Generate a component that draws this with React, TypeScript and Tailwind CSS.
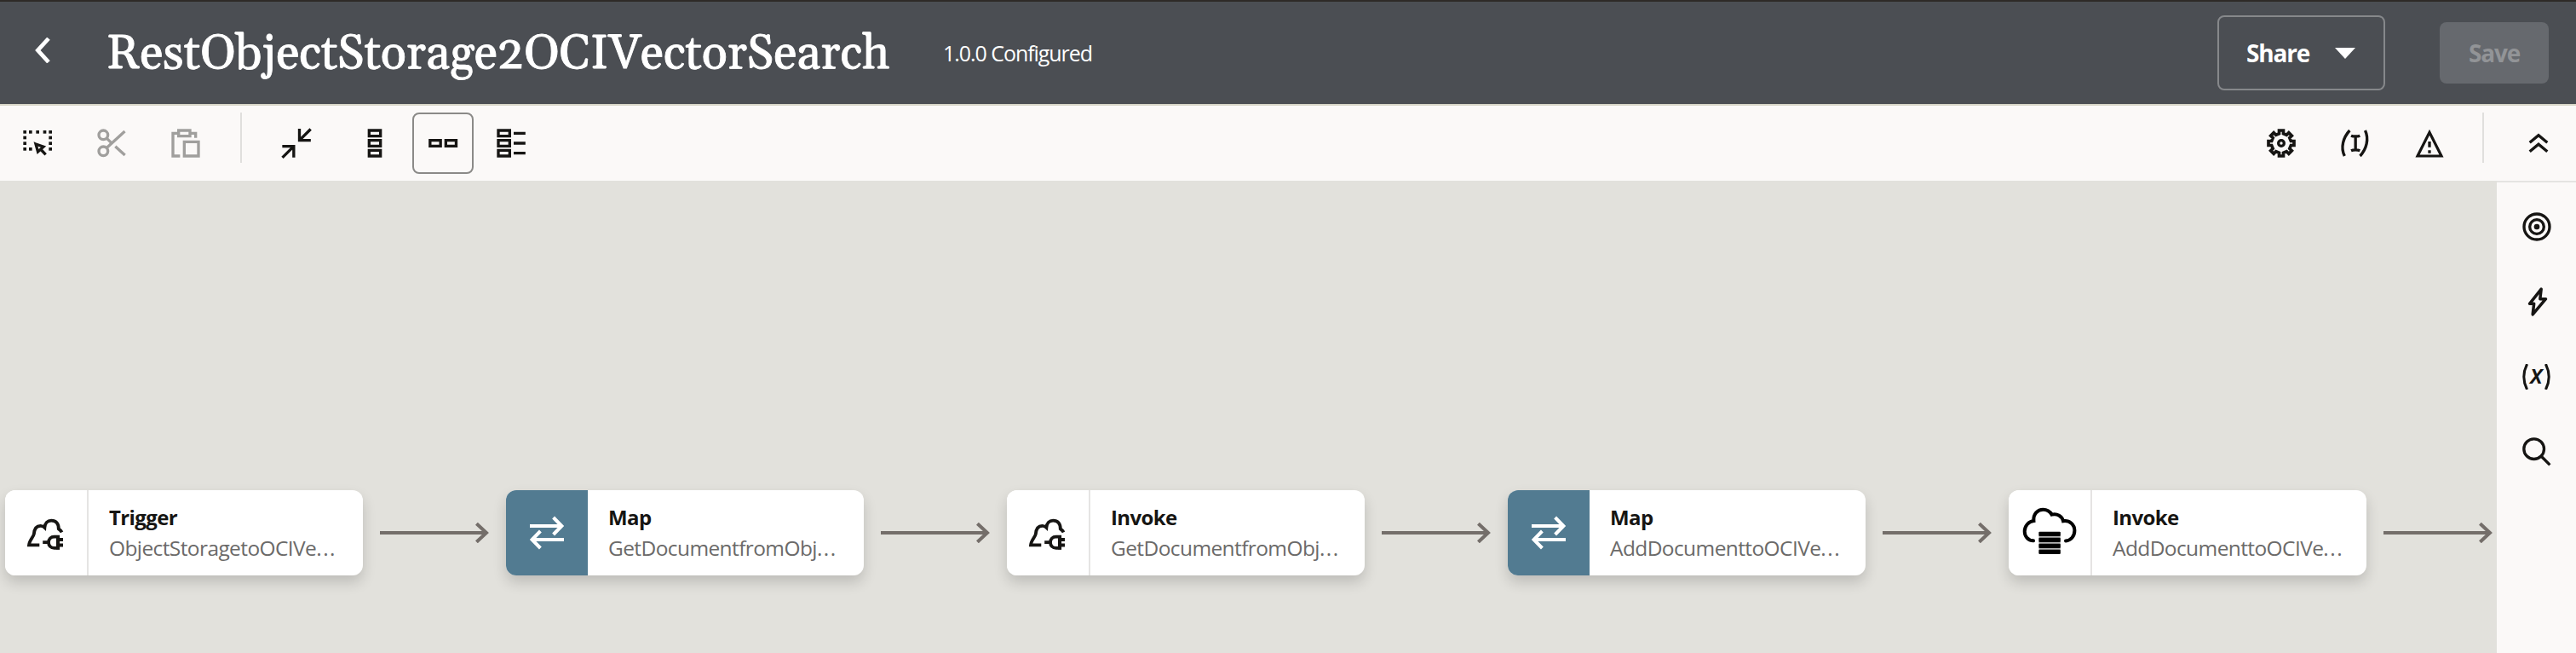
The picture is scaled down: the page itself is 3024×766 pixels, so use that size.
import type { ReactNode } from "react";

type IconProps = { children: ReactNode; className?: string };

function Icon({ children, className = "text-[#161513]" }: IconProps) {
  return (
    <svg
      viewBox="0 0 24 24"
      className={`size-10 shrink-0 ${className}`}
      fill="none"
      stroke="currentColor"
      strokeWidth={2}
    >
      {children}
    </svg>
  );
}

const selectDots: [number, number][] = [
  [2, 3], [6, 3], [11, 3], [16, 3], [20, 3],
  [2, 7], [20, 7], [2, 11], [20, 11], [2, 15], [6, 15], [20, 15],
];

const SelectIcon = () => (
  <Icon>
    {selectDots.map(([x, y]) => (
      <rect key={`${x}-${y}`} x={x} y={y} width="2.2" height="2.2" fill="currentColor" stroke="none" />
    ))}
    <path d="M10.8 12.6l5.4 1.9-3.9 3.5zM13.6 15.6l4.2 4.4" />
  </Icon>
);

const CutIcon = () => (
  <Icon className="text-[#a09f9d]">
    <circle cx="6.2" cy="6.2" r="3.2" />
    <circle cx="6.2" cy="17.6" r="3.2" />
    <path d="M8.5 15.3L21.3 3.6M8.5 8.5l4 3.9M14.6 14.2l6.8 6.2" />
  </Icon>
);

const PasteIcon = () => (
  <Icon className="text-[#a09f9d]">
    <path d="M8 21H3V5h4M15 5h4v3.2" />
    <path d="M7 3h8v4H7zM11 11h10v10H11z" />
  </Icon>
);

const CollapseIcon = () => (
  <Icon>
    <path d="M14.1 1.8V10H22.1M14.1 10L22 2.1M2 14.2h8.1V22M10.1 14.2L2.1 22.1" />
  </Icon>
);

const VerticalIcon = () => (
  <Icon>
    <path d="M8 3h8v4H8zM8 10h8v4H8zM8 17h8v4H8z" />
  </Icon>
);

const HorizontalIcon = () => (
  <Icon>
    <path d="M2.9 10h7.4v4H2.9zM14 10h7.3v4H14z" />
  </Icon>
);

const ListIcon = () => (
  <Icon>
    <path d="M3 3h8v4H3zM3 10h8v4H3zM3 17h8v4H3zM13.8 5h8.3M13.8 12h8.3M13.8 19h8.3" />
  </Icon>
);

const gearPoints = Array.from({ length: 8 }, (_, i) => {
  const a = (i * Math.PI) / 4;
  return [[-1.5, -6.8], [-1.5, -9], [1.5, -9], [1.5, -6.8]]
    .map(([x, y]) => {
      const px = 12 + x * Math.cos(a) - y * Math.sin(a);
      const py = 12 + x * Math.sin(a) + y * Math.cos(a);
      return `${px.toFixed(2)},${py.toFixed(2)}`;
    })
    .join(" ");
}).join(" ");

const GearIcon = () => (
  <Icon>
    <polygon points={gearPoints} strokeWidth={2.2} />
    <circle cx="12" cy="12" r="2" />
  </Icon>
);

const VariableIcon = () => (
  <Icon>
    <path d="M8 3C3.4 8 1.4 15 4.4 21M18.9 3c2.8 6 1 13-3.6 18" />
    <path d="M9 6.7c1.4.6 4.8.6 6.2 0M9 17.2c1.4-.6 4.8-.6 6.2 0M12.1 7v10" />
  </Icon>
);

const WarningIcon = () => (
  <Icon>
    <path d="M12 4.3L20.4 21H3.6z" strokeWidth={1.9} />
    <path d="M12 10.8v4M12 17v2" />
  </Icon>
);

const ChevronsUpIcon = () => (
  <Icon>
    <path d="M5.8 11.6L12 6.4l6.2 5.2M5.8 17.9L12 12.7l6.2 5.2" />
  </Icon>
);

const TargetIcon = () => (
  <Icon>
    <circle cx="12" cy="12" r="9" />
    <circle cx="12" cy="12" r="5" />
    <circle cx="12" cy="12" r="2" fill="currentColor" stroke="none" />
  </Icon>
);

const BoltIcon = () => (
  <Icon>
    <path d="M15.1 3.1L14.3 10h4L9.1 20.9l.9-7.5H6.9z" strokeLinejoin="round" strokeWidth={2.1} />
  </Icon>
);

const SearchIcon = () => (
  <Icon>
    <circle cx="10" cy="10" r="7.1" />
    <path d="M15 15l6.2 6.2" />
  </Icon>
);

const AdapterIcon = () => (
  <svg viewBox="0 0 48 48" className="size-12" fill="none" stroke="#161513" strokeWidth={3.8}>
    <path d="M16.3 38.4H4C4.300 33.500 8.800 29.500 9.800 25.600C10.200 20 12.500 15.800 17.500 15.800C19.600 15.800 21 16.400 22.400 17.800C22.800 12.600 25.800 9.600 30.200 9.600C35.800 9.600 39 13.400 38.800 19.400C40.200 20.400 41.600 21.400 42.600 23.400" />
    <path d="M38.200 28.600h-4.400c-4.200 0-6.800 2.800-6.800 6.600s2.600 6.600 6.800 6.600h4.400zM20.200 35.200H27M39 32h5M39 38.500h5" />
    <path d="M36 27h4v16.600h-4z" fill="#161513" stroke="none" />
  </svg>
);

const MapIcon = () => (
  <svg viewBox="0 0 48 48" className="size-12" fill="none" stroke="#fff" strokeWidth={4}>
    <path d="M4 16h37M31.600 6l9.800 10-9.800 10M44 32H7M16.400 22L6.600 32l9.800 10" />
  </svg>
);

const CloudDbIcon = () => (
  <svg viewBox="0 0 64 64" className="size-16" fill="none" stroke="#000" strokeWidth={4} strokeLinecap="round">
    <path d="M13 41.300C6.500 41 2.700 36 2.700 30.200C2.700 24 7.500 18.600 13.400 18C12.600 10 18 4.800 24.400 4.800C29 4.800 32.400 7 34.600 10.600C41 9 46.800 12.600 48 18.200C55.500 17 61.400 22.500 61.400 29.300C61.400 36 57 41 51 41.400" />
    <rect x="19.400" y="31" width="25.400" height="25" fill="#b5b5b5" stroke="none" />
    <path
      d="M20.400 30.700h23.400q1 0 1 1v3.200q0 1-1 1h-23.400q-1 0-1-1v-3.200q0-1 1-1zM20.400 37.700h23.400q1 0 1 1v3.200q0 1-1 1h-23.400q-1 0-1-1v-3.200q0-1 1-1zM20.400 44.700h23.400q1 0 1 1v3.200q0 1-1 1h-23.400q-1 0-1-1v-3.200q0-1 1-1zM20.400 51.700h23.400q1 0 1 1v3.200q0 1-1 1h-23.400q-1 0-1-1v-3.200q0-1 1-1z"
      fill="#000"
      stroke="none"
    />
  </svg>
);

const Connector = () => (
  <svg viewBox="0 0 128 24" className="mx-5 h-6 w-32 shrink-0" fill="none" stroke="#746e6a" strokeWidth={4}>
    <path d="M0 12h124" />
    <path d="M113.400 1.200L125 12l-11.600 10.800" />
  </svg>
);

type Kind = "adapter" | "map" | "cloud";
type Step = { kind: Kind; title: string; detail: string };

const steps: Step[] = [
  { kind: "adapter", title: "Trigger", detail: "ObjectStoragetoOCIVe" },
  { kind: "map", title: "Map", detail: "GetDocumentfromObj" },
  { kind: "adapter", title: "Invoke", detail: "GetDocumentfromObj" },
  { kind: "map", title: "Map", detail: "AddDocumenttoOCIVe" },
  { kind: "cloud", title: "Invoke", detail: "AddDocumenttoOCIVe" },
];

function StepCard({ kind, title, detail }: Step) {
  return (
    <div className="flex h-[100px] w-[420px] shrink-0 overflow-hidden rounded-xl bg-white shadow-[0_8px_16px_rgba(0,0,0,0.16)]">
      <div
        className={
          kind === "map"
            ? "flex w-24 items-center justify-center bg-[#527b91]"
            : "flex w-[98px] items-center justify-center border-r-2 border-[#e5e4e3] bg-white"
        }
      >
        {kind === "map" ? <MapIcon /> : kind === "cloud" ? <CloudDbIcon /> : <AdapterIcon />}
      </div>
      <div className="flex flex-col pt-[14px] pl-6">
        <span className="text-[24px] leading-9 font-bold tracking-[-0.6px] text-[#161513]">{title}</span>
        <span className="text-[24.5px] leading-9 tracking-[-0.6px] whitespace-nowrap text-[#6b6a69]">
          {detail}
          <span className="tracking-[1.5px]">...</span>
        </span>
      </div>
    </div>
  );
}

const iconButton = "flex size-[72px] shrink-0 items-center justify-center rounded-lg";

export default function App() {
  return (
    <div className="flex h-[766px] w-[3024px] flex-col overflow-hidden bg-[#e2e1dc] font-['Open_Sans','Noto_Sans',sans-serif]">
      <header className="flex h-[124px] shrink-0 items-center border-t-2 border-b-2 border-t-[#2e2a27] border-b-[#d9d7c9] bg-[#4b4e53] pr-8 pl-[41px] text-white">
        <svg viewBox="0 0 18 30" className="mb-[6px] h-[30px] w-[18px]" fill="none" stroke="#fff" strokeWidth={4.8}>
          <path d="M16 1.200L3.400 15 16 28.800" />
        </svg>
        <h1 className="mt-1 ml-[66px] w-[982px] font-['Gelasio','Georgia','Liberation_Serif',serif] text-[56px] leading-[72px] whitespace-nowrap oldstyle-nums [-webkit-text-stroke:0.8px_#fff]">
          RestObjectStorage2OCIVectorSearch
        </h1>
        <span className="text-[25px] leading-9 font-medium tracking-[-1.05px]">1.0.0 Configured</span>
        <button className="mr-16 ml-auto flex h-[88px] w-[197px] items-center rounded-lg border-2 border-[#86888b] pl-8">
          <span className="w-[104px] text-left text-[28px] leading-10 font-bold tracking-[-1.2px]">Share</span>
          <svg viewBox="0 0 24 13" className="h-[13px] w-6">
            <path d="M0 0h24L12 13z" fill="#fff" />
          </svg>
        </button>
        <button className="flex h-[72px] w-32 items-center justify-center rounded-lg bg-[#66696e] text-[28px] leading-10 font-bold tracking-[-1.2px] text-[#929497]">
          Save
        </button>
      </header>

      <div className="flex h-[88px] shrink-0 items-center bg-[#fbf9f8] pr-2">
        <div className="ml-2 flex gap-[15px]">
          <button className={iconButton}><SelectIcon /></button>
          <button className={iconButton}><CutIcon /></button>
          <button className={iconButton}><PasteIcon /></button>
        </div>
        <div className="mb-[13px] ml-[28px] h-[59px] w-0.5 bg-[#e0dfdd]" />
        <button className={`ml-[28px] ${iconButton}`}><CollapseIcon /></button>
        <div className="ml-5 flex gap-2">
          <button className={iconButton}><VerticalIcon /></button>
          <button className={`${iconButton} border-2 border-[#8b8a88]`}><HorizontalIcon /></button>
          <button className={iconButton}><ListIcon /></button>
        </div>
        <div className="ml-auto flex gap-[15px]">
          <button className={iconButton}><GearIcon /></button>
          <button className={iconButton}><VariableIcon /></button>
          <button className={iconButton}><WarningIcon /></button>
        </div>
        <div className="mb-[13px] ml-[26px] h-[59px] w-0.5 bg-[#e0dfdd]" />
        <button className={`ml-[28px] ${iconButton}`}><ChevronsUpIcon /></button>
      </div>

      <div className="flex min-h-0 flex-1">
        <main className="flex w-[2931px] items-start overflow-hidden pt-[363px] pl-1.5">
          {steps.map((step, i) => (
            <div key={i} className="flex shrink-0 items-center">
              <StepCard {...step} />
              <Connector />
            </div>
          ))}
        </main>
        <aside className="flex flex-1 flex-col items-center gap-4 border-t-2 border-[#e5e4e2] bg-[#fbf9f8] pt-4">
          <button className={iconButton}><TargetIcon /></button>
          <button className={iconButton}><BoltIcon /></button>
          <button className={iconButton}>
            <span className="flex items-center text-[#161513]">
              <svg viewBox="0 0 7 30" className="h-[30px] w-[7px]" fill="none" stroke="currentColor" strokeWidth={3}>
                <path d="M5.600 0q-7.600 15 0 30" />
              </svg>
              <span className="mx-0.5 -mt-[6px] text-[30px] leading-8 font-semibold italic">x</span>
              <svg viewBox="0 0 7 30" className="h-[30px] w-[7px]" fill="none" stroke="currentColor" strokeWidth={3}>
                <path d="M1.400 0q7.600 15 0 30" />
              </svg>
            </span>
          </button>
          <button className={iconButton}><SearchIcon /></button>
        </aside>
      </div>
    </div>
  );
}
